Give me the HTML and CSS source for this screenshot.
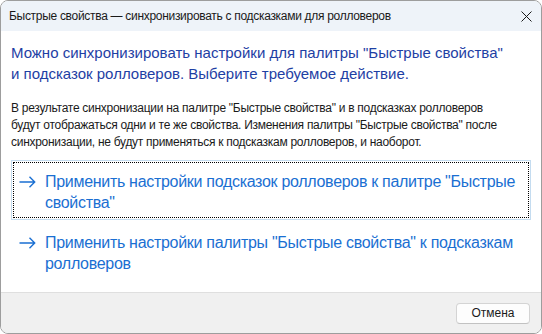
FILE: index.html
```html
<!DOCTYPE html>
<html lang="ru">
<head>
    <meta charset="UTF-8">
    <meta name="viewport" content="width=device-width, initial-scale=1.0">
    <title>Быстрые свойства — синхронизировать с подсказками для ролловеров</title>
    <link rel="stylesheet" href="styles.css">
</head>
<body>
    <div class="window">
        <header class="titlebar">
            <span class="title">Быстрые свойства — синхронизировать с подсказками для ролловеров</span>
            <button class="close" type="button" aria-label="Закрыть">
                <svg width="11" height="11" viewBox="0 0 11 11"><path d="M0.5 0.5 L10.5 10.5 M10.5 0.5 L0.5 10.5" stroke="#1a1a1a" stroke-width="1" fill="none"/></svg>
            </button>
        </header>

        <main class="content">
            <h1 class="instruction">Можно синхронизировать настройки для палитры "Быстрые свойства"<br>и подсказок ролловеров. Выберите требуемое действие.</h1>
            <p class="note">В результате синхронизации на палитре "Быстрые свойства" и в подсказках ролловеров<br>будут отображаться одни и те же свойства. Изменения палитры "Быстрые свойства" после<br>синхронизации, не будут применяться к подсказкам ролловеров, и наоборот.</p>

            <div class="commands">
                <a href="#" class="command focused">
                    <svg class="arrow" width="17" height="12" viewBox="0 0 17 12"><path d="M0.5 6 H15.5 M10.5 0.8 L15.7 6 L10.5 11.2" stroke="currentColor" stroke-width="1.4" fill="none"/></svg>
                    <span class="command-text">Применить настройки подсказок ролловеров к палитре "Быстрые<br>свойства"</span>
                </a>
                <a href="#" class="command">
                    <svg class="arrow" width="17" height="12" viewBox="0 0 17 12"><path d="M0.5 6 H15.5 M10.5 0.8 L15.7 6 L10.5 11.2" stroke="currentColor" stroke-width="1.4" fill="none"/></svg>
                    <span class="command-text">Применить настройки палитры "Быстрые свойства" к подсказкам<br>ролловеров</span>
                </a>
            </div>
        </main>

        <footer class="footer">
            <button class="btn" type="button">Отмена</button>
        </footer>
    </div>
</body>
</html>
```

FILE: styles.css
```css
*{
    margin: 0;
    padding: 0;
    box-sizing: border-box;
}
body{
    width: 542px;
    height: 334px;
    background: #fff;
    font-family: "Liberation Sans", Arial, sans-serif;
    overflow: hidden;
}
.window{
    width: 542px;
    height: 334px;
    border: 1px solid #9d9d9d;
    border-radius: 8px;
    overflow: hidden;
    display: flex;
    flex-direction: column;
    background: #fff;
}
.titlebar{
    height: 30px;
    flex: none;
    background: #eef3f9;
    display: flex;
    align-items: center;
    justify-content: space-between;
    padding: 0 8px 0 8px;
}
.title{
    font-size: 12px;
    letter-spacing: -0.3px;
    color: #1a1a1a;
    white-space: nowrap;
}
.close{
    width: 14px;
    height: 14px;
    border: none;
    background: none;
    display: flex;
    align-items: center;
    justify-content: center;
}
.content{
    flex: 1;
    padding: 11px 10px 0;
}
.instruction{
    font-size: 15px;
    font-weight: normal;
    line-height: 21px;
    color: #1e40a4;
    white-space: nowrap;
}
.note{
    margin-top: 16px;
    font-size: 12px;
    line-height: 17px;
    letter-spacing: -0.28px;
    color: #1a1a1a;
    white-space: nowrap;
}
.commands{
    margin-top: 9px;
    display: flex;
    flex-direction: column;
    gap: 1px;
}
.command{
    display: flex;
    align-items: flex-start;
    gap: 9px;
    height: 60px;
    padding: 10px 0 0 7px;
    border: 1px solid transparent;
    color: #1a6fd2;
    text-decoration: none;
}
.command.focused{
    border-color: #c4dcf0;
    outline: 1px dotted #000;
    outline-offset: -3px;
}
.arrow{
    flex: none;
    margin-top: 5px;
}
.command-text{
    font-size: 16px;
    line-height: 21px;
    letter-spacing: -0.3px;
    white-space: nowrap;
}
.footer{
    height: 41px;
    flex: none;
    background: #f0f0f0;
    border-top: 1px solid #dfdfdf;
    display: flex;
    align-items: center;
    justify-content: flex-end;
    padding: 0 11px 0 0;
}
.btn{
    width: 74px;
    height: 21px;
    background: #fdfdfd;
    border: 1px solid #d4d4d4;
    border-bottom-color: #c2c2c2;
    border-radius: 4px;
    font-family: "Liberation Sans", Arial, sans-serif;
    font-size: 12px;
    color: #1a1a1a;
}
```
